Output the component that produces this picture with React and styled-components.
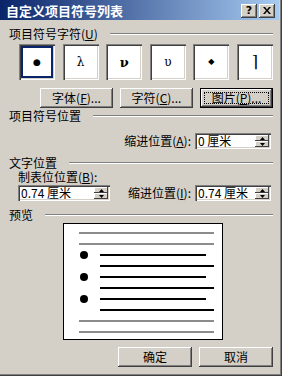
import React from "react";
import styled, { createGlobalStyle } from "styled-components";

const Global = createGlobalStyle`
  html, body { margin: 0; padding: 0; background: #d4d0c8; }
  body {
    font-family: "Noto Sans CJK SC", "Noto Sans", sans-serif;
    font-size: 12px;
    color: #000;
  }
  * { box-sizing: border-box; }
`;

const Window = styled.div`
  width: 282px;
  height: 376px;
  background: #d4d0c8;
  display: flex;
  flex-direction: column;
  padding: 0 3px 3px 0;
  box-shadow: inset -1px -1px #404040, inset -2px -2px #808080;
  overflow: hidden;
`;

const TitleBar = styled.div`
  height: 20px;
  display: flex;
  align-items: center;
  padding: 2px 4px 0 6px;
  background: linear-gradient(to right, #0a246a, #a6caf0);
`;

const TitleText = styled.div`
  color: #fff;
  font-weight: bold;
  font-size: 13px;
  line-height: 14px;
`;

const CaptionGroup = styled.div`
  margin-left: auto;
  display: flex;
  gap: 2px;
`;

const CaptionButton = styled.div`
  width: 16px;
  height: 14px;
  background: #d4d0c8;
  box-shadow: inset -1px -1px #404040, inset 1px 1px #fff, inset -2px -2px #808080;
  display: flex;
  align-items: center;
  justify-content: center;
  font-family: "DejaVu Sans", sans-serif;
  font-weight: bold;
  font-size: 11px;
  line-height: 11px;
  padding-bottom: 1px;
`;

const Content = styled.div`
  display: flex;
  flex-direction: column;
  padding: 0 6px 0 9px;
`;

const GroupHeader = styled.div`
  display: flex;
  align-items: center;
  gap: 12px;
  height: 14px;
  line-height: 14px;
  margin-top: ${(p) => p.$mt}px;
  white-space: nowrap;
`;

const HeaderRule = styled.div`
  flex: 1;
  height: 2px;
  border-top: 1px solid #808080;
  border-bottom: 1px solid #fff;
`;

const SymbolRow = styled.div`
  display: flex;
  justify-content: space-between;
  padding-left: 10px;
  margin-top: 3px;
`;

const SymbolCell = styled.div`
  position: relative;
  width: 36px;
  height: 36px;
  background: #fff;
  box-shadow: inset 1px 1px #808080, inset 2px 2px #404040, inset -1px -1px #fff,
    inset -2px -2px #d4d0c8;
  display: flex;
  align-items: center;
  justify-content: center;
  font-family: ${(p) => p.$font || '"DejaVu Serif", serif'};
  font-size: ${(p) => p.$size || 13}px;
  font-weight: ${(p) => (p.$bold ? "bold" : "normal")};
  line-height: 1;
  &::after {
    content: "";
    display: ${(p) => (p.$selected ? "block" : "none")};
    position: absolute;
    inset: 2px;
    border: 2px solid #0a246a;
  }
`;

const ButtonRow = styled.div`
  display: flex;
  justify-content: flex-end;
  gap: 7px;
  margin-top: ${(p) => p.$mt}px;
`;

const Button = styled.div`
  position: relative;
  width: ${(p) => p.$w || 73}px;
  height: 20px;
  background: #d4d0c8;
  display: flex;
  align-items: center;
  justify-content: center;
  line-height: 14px;
  box-shadow: ${(p) =>
    p.$default
      ? "inset 0 0 0 1px #000, inset -2px -2px #404040, inset 2px 2px #fff, inset -3px -3px #808080"
      : "inset -1px -1px #404040, inset 1px 1px #fff, inset -2px -2px #808080"};
  &::after {
    content: "";
    display: ${(p) => (p.$focus ? "block" : "none")};
    position: absolute;
    inset: 4px;
    border: 1px dotted #000;
  }
`;

const FieldRow = styled.div`
  display: flex;
  align-items: center;
  justify-content: flex-end;
  gap: 4px;
  padding-right: 2px;
  margin-top: ${(p) => p.$mt}px;
`;

const Label = styled.span`
  line-height: ${(p) => p.$lh || 14}px;
  white-space: nowrap;
`;

const SpinBox = styled.div`
  width: ${(p) => p.$w}px;
  height: 16px;
  display: flex;
  padding: 2px;
  background: #fff;
  box-shadow: inset 1px 1px #808080, inset 2px 2px #404040, inset -1px -1px #fff,
    inset -2px -2px #d4d0c8;
`;

const SpinValue = styled.div`
  flex: 1;
  display: flex;
  align-items: center;
  font-size: 12px;
  line-height: 12px;
  padding-left: 1px;
  white-space: pre;
`;

const SpinButtons = styled.div`
  width: 14px;
  display: flex;
  flex-direction: column;
`;

const SpinHalf = styled.div`
  flex: 1;
  background: #d4d0c8;
  box-shadow: inset -1px -1px #404040, inset 1px 1px #fff;
  display: flex;
  align-items: center;
  justify-content: center;
`;

const TextPosRow = styled.div`
  display: flex;
  align-items: flex-end;
  padding: 1px 0 0 9px;
`;

const LeftCol = styled.div`
  display: flex;
  flex-direction: column;
  gap: 2px;
`;

const RightGroup = styled.div`
  margin-left: auto;
  display: flex;
  align-items: center;
  gap: 4px;
  padding-right: 2px;
`;

const PreviewWrap = styled.div`
  padding-left: 54px;
  margin-top: 1px;
`;

const PreviewBox = styled.div`
  width: 160px;
  height: 117px;
  border: 1px solid #000;
  background: #fff;
  padding-top: 3px;
  display: flex;
  flex-direction: column;
`;

const PreviewRow = styled.div`
  height: 11px;
  display: flex;
  align-items: center;
  padding-left: ${(p) => 15 + (p.$indent || 0)}px;
`;

const Bullet = styled.div`
  width: 8px;
  height: 8px;
  border-radius: 50%;
  background: #000;
  margin-left: 1px;
  margin-right: 12px;
`;

const Rule = styled.div`
  width: ${(p) => p.$w}px;
  height: 2px;
  background: ${(p) => (p.$gray ? "#8c8c8c" : "#000")};
`;

const Arrow = ({ up }) => (
  <svg width="5" height="3" viewBox="0 0 5 3">
    <path d={up ? "M2.5 0 L5 3 L0 3 Z" : "M0 0 L5 0 L2.5 3 Z"} fill="#000" />
  </svg>
);

const Spin = ({ w, value }) => (
  <SpinBox $w={w}>
    <SpinValue>{value}</SpinValue>
    <SpinButtons>
      <SpinHalf>
        <Arrow up />
      </SpinHalf>
      <SpinHalf>
        <Arrow />
      </SpinHalf>
    </SpinButtons>
  </SpinBox>
);

const symbols = [
  { ch: "●", selected: true, font: '"DejaVu Sans", sans-serif', size: 9 },
  { ch: "λ", size: 12 },
  { ch: "ν", size: 13, bold: true },
  { ch: "υ", size: 12 },
  { ch: "◆", font: '"DejaVu Sans", sans-serif', size: 8 },
  { ch: "⌉", size: 16 },
];

export default function App() {
  return (
    <>
      <Global />
      <Window>
        <TitleBar>
          <TitleText>自定义项目符号列表</TitleText>
          <CaptionGroup>
            <CaptionButton>?</CaptionButton>
            <CaptionButton>
              <svg width="8" height="7" viewBox="0 0 8 7">
                <path d="M0 0 L2 0 L4 2.5 L6 0 L8 0 L5 3.5 L8 7 L6 7 L4 4.5 L2 7 L0 7 L3 3.5 Z" fill="#000" />
              </svg>
            </CaptionButton>
          </CaptionGroup>
        </TitleBar>
        <Content>
          <GroupHeader $mt={7}>
            <span>
              项目符号字符(<u>U</u>)
            </span>
            <HeaderRule />
          </GroupHeader>
          <SymbolRow>
            {symbols.map((s, i) => (
              <SymbolCell
                key={i}
                $selected={s.selected}
                $font={s.font}
                $size={s.size}
                $bold={s.bold}
              >
                {s.ch}
              </SymbolCell>
            ))}
          </SymbolRow>
          <ButtonRow $mt={8}>
            <Button>
              字体(<u>F</u>)...
            </Button>
            <Button>
              字符(<u>C</u>)...
            </Button>
            <Button $default $focus>
              图片(<u>P</u>)...
            </Button>
          </ButtonRow>
          <GroupHeader $mt={1}>
            <span>项目符号位置</span>
            <HeaderRule />
          </GroupHeader>
          <FieldRow $mt={10}>
            <Label>
              缩进位置(<u>A</u>):
            </Label>
            <Spin w={76} value="0 厘米" />
          </FieldRow>
          <GroupHeader $mt={7}>
            <span>文字位置</span>
            <HeaderRule />
          </GroupHeader>
          <TextPosRow>
            <LeftCol>
              <Label $lh={12}>
                制表位位置(<u>B</u>):
              </Label>
              <Spin w={92} value="0.74 厘米" />
            </LeftCol>
            <RightGroup>
              <Label>
                缩进位置(<u>I</u>):
              </Label>
              <Spin w={76} value="0.74 厘米" />
            </RightGroup>
          </TextPosRow>
          <GroupHeader $mt={7}>
            <span>预览</span>
            <HeaderRule />
          </GroupHeader>
          <PreviewWrap>
            <PreviewBox>
              <PreviewRow>
                <Rule $gray $w={135} />
              </PreviewRow>
              <PreviewRow>
                <Rule $gray $w={135} />
              </PreviewRow>
              {[0, 1, 2].map((i) => (
                <React.Fragment key={i}>
                  <PreviewRow>
                    <Bullet />
                    <Rule $w={106} />
                  </PreviewRow>
                  <PreviewRow $indent={21}>
                    <Rule $w={114} />
                  </PreviewRow>
                </React.Fragment>
              ))}
              <PreviewRow>
                <Rule $gray $w={135} />
              </PreviewRow>
              <PreviewRow>
                <Rule $gray $w={135} />
              </PreviewRow>
            </PreviewBox>
          </PreviewWrap>
          <ButtonRow $mt={7}>
            <Button $w={74}>确定</Button>
            <Button $w={74}>取消</Button>
          </ButtonRow>
        </Content>
      </Window>
    </>
  );
}
